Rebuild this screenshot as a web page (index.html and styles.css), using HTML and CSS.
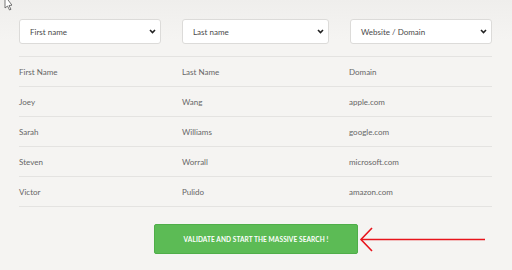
FILE: index.html
```html
<!DOCTYPE html>
<html lang="en">
<head>
  <meta charset="UTF-8">
  <title>Massive Search</title>
  <link rel="stylesheet" href="styles.css">
</head>
<body>
  <svg class="cursor" width="12" height="12" viewBox="0 0 12 12">
    <path d="M5 -4 L5 8 L7.5 6 L9.5 10 L11 9.3 L9 5.5 L12 5.2 Z" fill="#fff" stroke="#555" stroke-width="0.8"/>
  </svg>

  <main class="wrap">
    <div class="filters">
      <div class="select">
        <span>First name</span>
        <svg width="7" height="5" viewBox="0 0 7 5"><path d="M1 1 L3.5 3.5 L6 1" fill="none" stroke="#222" stroke-width="1.6"/></svg>
      </div>
      <div class="select">
        <span>Last name</span>
        <svg width="7" height="5" viewBox="0 0 7 5"><path d="M1 1 L3.5 3.5 L6 1" fill="none" stroke="#222" stroke-width="1.6"/></svg>
      </div>
      <div class="select">
        <span>Website / Domain</span>
        <svg width="7" height="5" viewBox="0 0 7 5"><path d="M1 1 L3.5 3.5 L6 1" fill="none" stroke="#222" stroke-width="1.6"/></svg>
      </div>
    </div>

    <table class="people">
      <thead>
        <tr><th>First Name</th><th>Last Name</th><th>Domain</th></tr>
      </thead>
      <tbody>
        <tr><td>Joey</td><td>Wang</td><td>apple.com</td></tr>
        <tr><td>Sarah</td><td>Williams</td><td>google.com</td></tr>
        <tr><td>Steven</td><td>Worrall</td><td>microsoft.com</td></tr>
        <tr><td>Victor</td><td>Pulido</td><td>amazon.com</td></tr>
      </tbody>
    </table>

    <div class="actions">
      <button class="btn">VALIDATE AND START THE MASSIVE SEARCH !</button>
      <svg class="arrow" width="128" height="26" viewBox="0 0 128 26">
        <path d="M2 12.5 L126 12.5" stroke="#e8141c" stroke-width="1.6" fill="none"/>
        <path d="M13 1 L2 12.5 L13 24" stroke="#e8141c" stroke-width="1.6" fill="none"/>
      </svg>
    </div>
  </main>
</body>
</html>
```

FILE: styles.css
```css
body {
  margin: 0;
  font-family: 'Lato', sans-serif;
  color: #666;
  background: linear-gradient(180deg, #efeeec 0, #f5f4f2 40px) #f5f4f2;
  width: 512px;
  height: 270px;
  overflow: hidden;
}

.cursor {
  position: absolute;
  left: 0;
  top: 0;
}

.wrap {
  width: 473px;
  margin-left: 19px;
  padding-top: 19px;
}

.filters {
  display: grid;
  grid-template-columns: 142px 147px 142px;
  column-gap: 21px;
  padding-bottom: 12px;
  border-bottom: 1px solid #e4e3e1;
}

.select {
  height: 23px;
  background: #fff;
  border: 1px solid #dcdbd9;
  border-radius: 3px;
  display: flex;
  align-items: center;
  justify-content: space-between;
  padding: 0 4px 0 10px;
  font-size: 8px;
  color: #4a4a4a;
}

.people {
  width: 100%;
  border-collapse: collapse;
}

.people th,
.people td {
  height: 29px;
  padding: 0;
  text-align: left;
  font-weight: 400;
  font-size: 8px;
  color: #666;
  border-bottom: 1px solid #e4e3e1;
}

.people th:nth-child(1) { width: 163px; }
.people th:nth-child(2) { width: 167px; }

.actions {
  position: relative;
  display: flex;
  justify-content: center;
  padding-top: 17px;
}

.btn {
  margin-left: 1px;
  width: 204px;
  height: 30px;
  background: #5cbb55;
  border: 1px solid #4fae49;
  border-radius: 2px;
  color: #fff;
  font-family: 'Lato', sans-serif;
  font-weight: 700;
  font-size: 6.5px;
  letter-spacing: 0.1px;
}

.arrow {
  position: absolute;
  left: 340px;
  top: 20px;
}
```
